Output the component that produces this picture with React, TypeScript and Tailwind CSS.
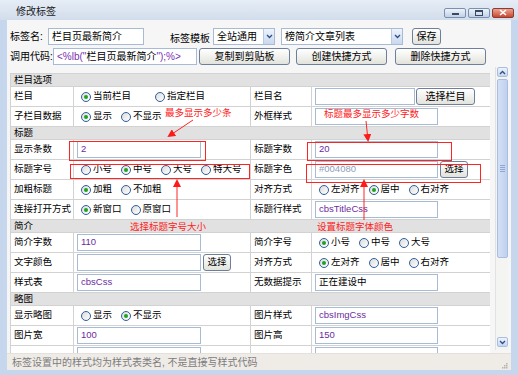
import type { ReactNode } from 'react'

const FONT = "font-['Liberation_Sans','Noto_Sans_CJK_SC',sans-serif]"

function Radio({ checked }: { checked?: boolean }) {
  return (
    <span className="w-[10px] h-[10px] rounded-full border border-[#2f5f9c] bg-gradient-to-br from-[#dcdcdc] to-white flex items-center justify-center shrink-0">
      {checked && <span className="w-[4px] h-[4px] rounded-full bg-[#1fa31f]" />}
    </span>
  )
}

function Radios({ items, checked, gap = 'gap-[9px]' }: { items: string[]; checked: number; gap?: string }) {
  return (
    <div className={`flex items-center ${gap}`}>
      {items.map((t, i) => (
        <div key={t} className="flex items-center gap-[2px]">
          <Radio checked={i === checked} />
          <span>{t}</span>
        </div>
      ))}
    </div>
  )
}

function Field({ className = '', children }: { className?: string; children?: ReactNode }) {
  return (
    <div className={`h-[17px] border border-[#a7bbd5] bg-white px-[3px] flex items-center whitespace-nowrap overflow-hidden ${className}`}>
      {children}
    </div>
  )
}

function Btn({ className = '', children }: { className?: string; children: ReactNode }) {
  return (
    <div className={`h-[17px] rounded-[3px] border border-[#6d7f9a] bg-gradient-to-b from-white to-[#e3e3dd] flex items-center justify-center whitespace-nowrap ${className}`}>
      {children}
    </div>
  )
}

function Select({ className = '', children }: { className?: string; children: ReactNode }) {
  return (
    <div className={`h-[17px] border border-[#a7bbd5] bg-white flex items-center ${className}`}>
      <span className="flex-1 pl-[3px] whitespace-nowrap overflow-hidden">{children}</span>
      <span className="w-[11px] h-[15px] bg-gradient-to-b from-[#eef3fb] to-[#c9d8f0] border-l border-[#b8c9e3] flex items-center justify-center">
        <svg width="7" height="5" viewBox="0 0 7 5">
          <path d="M1 1 L3.5 3.5 L6 1" stroke="#2c4f86" strokeWidth="1.3" fill="none" />
        </svg>
      </span>
    </div>
  )
}

function Section({ title }: { title: string }) {
  return (
    <tr>
      <td colSpan={4} className="h-[13px] bg-[#e1e1e1] border border-[#d2d2d2] px-[3px] leading-none">
        {title}
      </td>
    </tr>
  )
}

function Row({ a, b, c, d }: { a: string; b: ReactNode; c: string; d: ReactNode }) {
  return (
    <tr>
      <td className="h-[20px] border border-[#d2d2d2] px-[3px] whitespace-nowrap">{a}</td>
      <td className="border border-[#d2d2d2] pl-[3px]">{b}</td>
      <td className="border border-[#d2d2d2] px-[3px] whitespace-nowrap">{c}</td>
      <td className="border border-[#d2d2d2] pl-[3px]">{d}</td>
    </tr>
  )
}

const val = 'text-[#6a2d9f]'

export default function App() {
  return (
    <div className={`relative w-[518px] h-[375px] overflow-hidden bg-[#c6d7ed] flex flex-col text-[9.5px] text-black ${FONT}`}>
      {/* title bar */}
      <div className="h-[20px] shrink-0 bg-gradient-to-b from-[#e6edf6] to-[#d2ddec] flex items-center pl-[16px] pr-[4px]">
        <span className="text-[10px] text-[#1a1a1a] mt-[3px]">修改标签</span>
        <div className="ml-auto flex items-center gap-[2px] mt-[5px]">
          <div className="w-[22px] h-[10px] rounded-[2px] border border-[#7b8fae] bg-gradient-to-b from-[#eef3fa] to-[#c2d1e7] flex items-end justify-center pb-[2px]">
            <span className="w-[7px] h-[2px] bg-[#3a4a62]" />
          </div>
          <div className="w-[22px] h-[10px] rounded-[2px] border border-[#7b8fae] bg-gradient-to-b from-[#eef3fa] to-[#c2d1e7] flex items-center justify-center">
            <span className="w-[8px] h-[6px] border border-[#3a4a62] border-t-2" />
          </div>
          <div className="w-[22px] h-[10px] rounded-[2px] border border-[#8d3b2f] bg-gradient-to-b from-[#e9a395] to-[#c9452f] flex items-center justify-center">
            <svg width="8" height="7" viewBox="0 0 8 7">
              <path d="M1 1 L7 6 M7 1 L1 6" stroke="white" strokeWidth="1.6" />
            </svg>
          </div>
        </div>
      </div>

      {/* body */}
      <div className="h-[350px] shrink-0 mx-[7px] flex flex-col bg-[#f6f6f6]">
        <div className="h-[47px] shrink-0 pt-[7px] pl-[3px] flex flex-col gap-[2px] text-[10px]">
          <div className="flex items-center">
            <span className="w-[38px]">标签名:</span>
            <Field className="w-[96px] text-black">栏目页最新简介</Field>
            <span className="ml-[26px] w-[43px] mt-[4px]">标签模板</span>
            <Select className="w-[62px]">全站通用</Select>
            <Select className="ml-[6px] w-[122px]">榜简介文章列表</Select>
            <Btn className="ml-[9px] w-[29px] -mt-[1px]">保存</Btn>
          </div>
          <div className="flex items-center">
            <span className="w-[43px]">调用代码:</span>
            <Field className="w-[144px] text-[#7a2fb0]">
              {'<%lb("'}
              <span className="text-black">栏目页最新简介</span>
              {'");%>'}
            </Field>
            <Btn className="ml-[2px] w-[91px]">复制到剪贴板</Btn>
            <Btn className="ml-[6px] w-[91px]">创建快捷方式</Btn>
            <Btn className="ml-[8px] w-[91px]">删除快捷方式</Btn>
          </div>
        </div>

        <div className="h-[286px] shrink-0 flex pl-[3px] overflow-hidden">
          <div className="w-[480px] h-[286px] pt-[6px] overflow-hidden">
            <table className="w-[480px] table-fixed border-collapse bg-white">
              <colgroup>
                <col className="w-[63px]" />
                <col className="w-[177px]" />
                <col className="w-[61px]" />
                <col className="w-[179px]" />
              </colgroup>
              <tbody>
                <Section title="栏目选项" />
                <Row
                  a="栏目"
                  b={<div className="pl-[4px]"><Radios items={['当前栏目', '指定栏目']} checked={0} gap="gap-[24px]" /></div>}
                  c="栏目名"
                  d={
                    <div className="flex items-center">
                      <Field className="w-[100px] h-[16px]" />
                      <Btn className="ml-[1px] w-[59px] h-[16px] text-[10px]">选择栏目</Btn>
                    </div>
                  }
                />
                <Row
                  a="子栏目数据"
                  b={<div className="pl-[4px]"><Radios items={['显示', '不显示']} checked={0} /></div>}
                  c="外框样式"
                  d={<Field className="w-[123px]" />}
                />
                <Section title="标题" />
                <Row
                  a="显示条数"
                  b={<Field className={`w-[124px] ${val}`}>2</Field>}
                  c="标题字数"
                  d={<Field className={`w-[123px] ${val}`}>20</Field>}
                />
                <Row
                  a="标题字号"
                  b={<div className="pl-[4px]"><Radios items={['小号', '中号', '大号', '特大号']} checked={1} /></div>}
                  c="标题字色"
                  d={
                    <div className="flex items-center">
                      <Field className="w-[123px] bg-[#0b3d7b] border-[#5d7aa3] text-[#8c9fba]">#004080</Field>
                      <Btn className="ml-[2px] w-[28px]">选择</Btn>
                    </div>
                  }
                />
                <Row
                  a="加粗标题"
                  b={<div className="pl-[4px]"><Radios items={['加粗', '不加粗']} checked={0} /></div>}
                  c="对齐方式"
                  d={<div className="pl-[4px]"><Radios items={['左对齐', '居中', '右对齐']} checked={1} /></div>}
                />
                <Row
                  a="连接打开方式"
                  b={<div className="pl-[4px]"><Radios items={['新窗口', '原窗口']} checked={0} /></div>}
                  c="标题行样式"
                  d={<Field className={`w-[123px] ${val}`}>cbsTitleCss</Field>}
                />
                <Section title="简介" />
                <Row
                  a="简介字数"
                  b={<Field className={`w-[124px] ${val}`}>110</Field>}
                  c="简介字号"
                  d={<div className="pl-[4px]"><Radios items={['小号', '中号', '大号']} checked={0} /></div>}
                />
                <Row
                  a="文字颜色"
                  b={
                    <div className="flex items-center">
                      <Field className="w-[124px] bg-[#7c7c7c] border-[#9aa8b8]" />
                      <Btn className="ml-[2px] w-[28px]">选择</Btn>
                    </div>
                  }
                  c="对齐方式"
                  d={<div className="pl-[4px]"><Radios items={['左对齐', '居中', '右对齐']} checked={0} /></div>}
                />
                <Row
                  a="样式表"
                  b={<Field className={`w-[124px] ${val}`}>cbsCss</Field>}
                  c="无数据提示"
                  d={<Field className="w-[123px]">正在建设中</Field>}
                />
                <Section title="略图" />
                <Row
                  a="显示略图"
                  b={<div className="pl-[4px]"><Radios items={['显示', '不显示']} checked={1} /></div>}
                  c="图片样式"
                  d={<Field className={`w-[123px] ${val}`}>cbsImgCss</Field>}
                />
                <Row
                  a="图片宽"
                  b={<Field className={`w-[124px] ${val}`}>100</Field>}
                  c="图片高"
                  d={<Field className={`w-[123px] ${val}`}>150</Field>}
                />
                <Row
                  a=""
                  b={<Field className="w-[124px]" />}
                  c=""
                  d={<Field className="w-[123px]" />}
                />
              </tbody>
            </table>
          </div>

          {/* scrollbar */}
          <div className="ml-[5px] w-[13px] h-[283px] bg-[#f4f4f2] border-l border-[#e2e2e2] flex flex-col items-center">
            <div className="w-[11px] h-[10px] rounded-[2px] border border-[#a9bde0] bg-gradient-to-b from-[#eef3fb] to-[#c7d6f1] flex items-center justify-center">
              <svg width="7" height="5" viewBox="0 0 7 5">
                <path d="M1 4 L3.5 1.5 L6 4" stroke="#2c4f86" strokeWidth="1.3" fill="none" />
              </svg>
            </div>
            <div className="mt-[2px] w-[11px] h-[179px] rounded-[2px] border border-[#a9bde0] bg-gradient-to-r from-[#d4e0f5] to-[#c0d1ef] flex flex-col items-center justify-center gap-[1px]">
              <span className="w-[5px] h-px bg-[#8ea6d0]" />
              <span className="w-[5px] h-px bg-[#8ea6d0]" />
              <span className="w-[5px] h-px bg-[#8ea6d0]" />
              <span className="w-[5px] h-px bg-[#8ea6d0]" />
            </div>
            <div className="flex-1" />
            <div className="mb-[3px] w-[11px] h-[10px] rounded-[2px] border border-[#a9bde0] bg-gradient-to-b from-[#eef3fb] to-[#c7d6f1] flex items-center justify-center">
              <svg width="7" height="5" viewBox="0 0 7 5">
                <path d="M1 1 L3.5 3.5 L6 1" stroke="#2c4f86" strokeWidth="1.3" fill="none" />
              </svg>
            </div>
          </div>
        </div>

        {/* footer */}
        <div className="h-[17px] shrink-0 bg-[#efebe7] border-t border-[#e4e0dc] flex items-center pl-[5px] pr-[3px] text-[10px] text-[#7c7c7c]">
          <span>标签设置中的样式均为样式表类名, 不是直接写样式代码</span>
          <svg className="ml-auto mt-[6px]" width="7" height="7" viewBox="0 0 7 7">
            <rect x="5" y="1" width="1.5" height="1.5" fill="#b8b4ae" />
            <rect x="3" y="3" width="1.5" height="1.5" fill="#b8b4ae" />
            <rect x="5" y="3" width="1.5" height="1.5" fill="#b8b4ae" />
            <rect x="1" y="5" width="1.5" height="1.5" fill="#b8b4ae" />
            <rect x="3" y="5" width="1.5" height="1.5" fill="#b8b4ae" />
            <rect x="5" y="5" width="1.5" height="1.5" fill="#b8b4ae" />
          </svg>
        </div>
      </div>

      {/* red annotations */}
      <svg className="absolute left-0 top-0 pointer-events-none" width="518" height="375" viewBox="0 0 518 375">
        <defs>
          <marker id="ah" markerWidth="8" markerHeight="8" refX="6" refY="4" orient="auto" markerUnits="userSpaceOnUse">
            <path d="M0 0 L8 4 L0 8 Z" fill="#ff1a1a" />
          </marker>
        </defs>
        <g fill="none" stroke="#ff2424" strokeWidth="1">
          <rect x="69.5" y="141.5" width="136" height="19" />
          <rect x="307.5" y="142.5" width="144" height="18" />
          <rect x="70.5" y="164.5" width="179" height="14" />
          <rect x="306.5" y="164.5" width="174" height="18" />
          <line x1="193" y1="120" x2="169" y2="136" markerEnd="url(#ah)" />
          <line x1="366" y1="121" x2="368" y2="140" markerEnd="url(#ah)" />
          <line x1="177" y1="217" x2="177" y2="181" markerEnd="url(#ah)" />
          <line x1="364" y1="220" x2="364" y2="181" markerEnd="url(#ah)" />
        </g>
      </svg>
      <span className="absolute left-[165px] top-[106px] text-[9.5px] text-[#ff2020] whitespace-nowrap">最多显示多少条</span>
      <span className="absolute left-[324px] top-[107px] text-[9.5px] text-[#ff2020] whitespace-nowrap">标题最多显示多少字数</span>
      <span className="absolute left-[130px] top-[220px] text-[9.5px] text-[#ff2020] whitespace-nowrap">选择标题字号大小</span>
      <span className="absolute left-[317px] top-[220px] text-[9.5px] text-[#ff2020] whitespace-nowrap">设置标题字体颜色</span>
    </div>
  )
}
